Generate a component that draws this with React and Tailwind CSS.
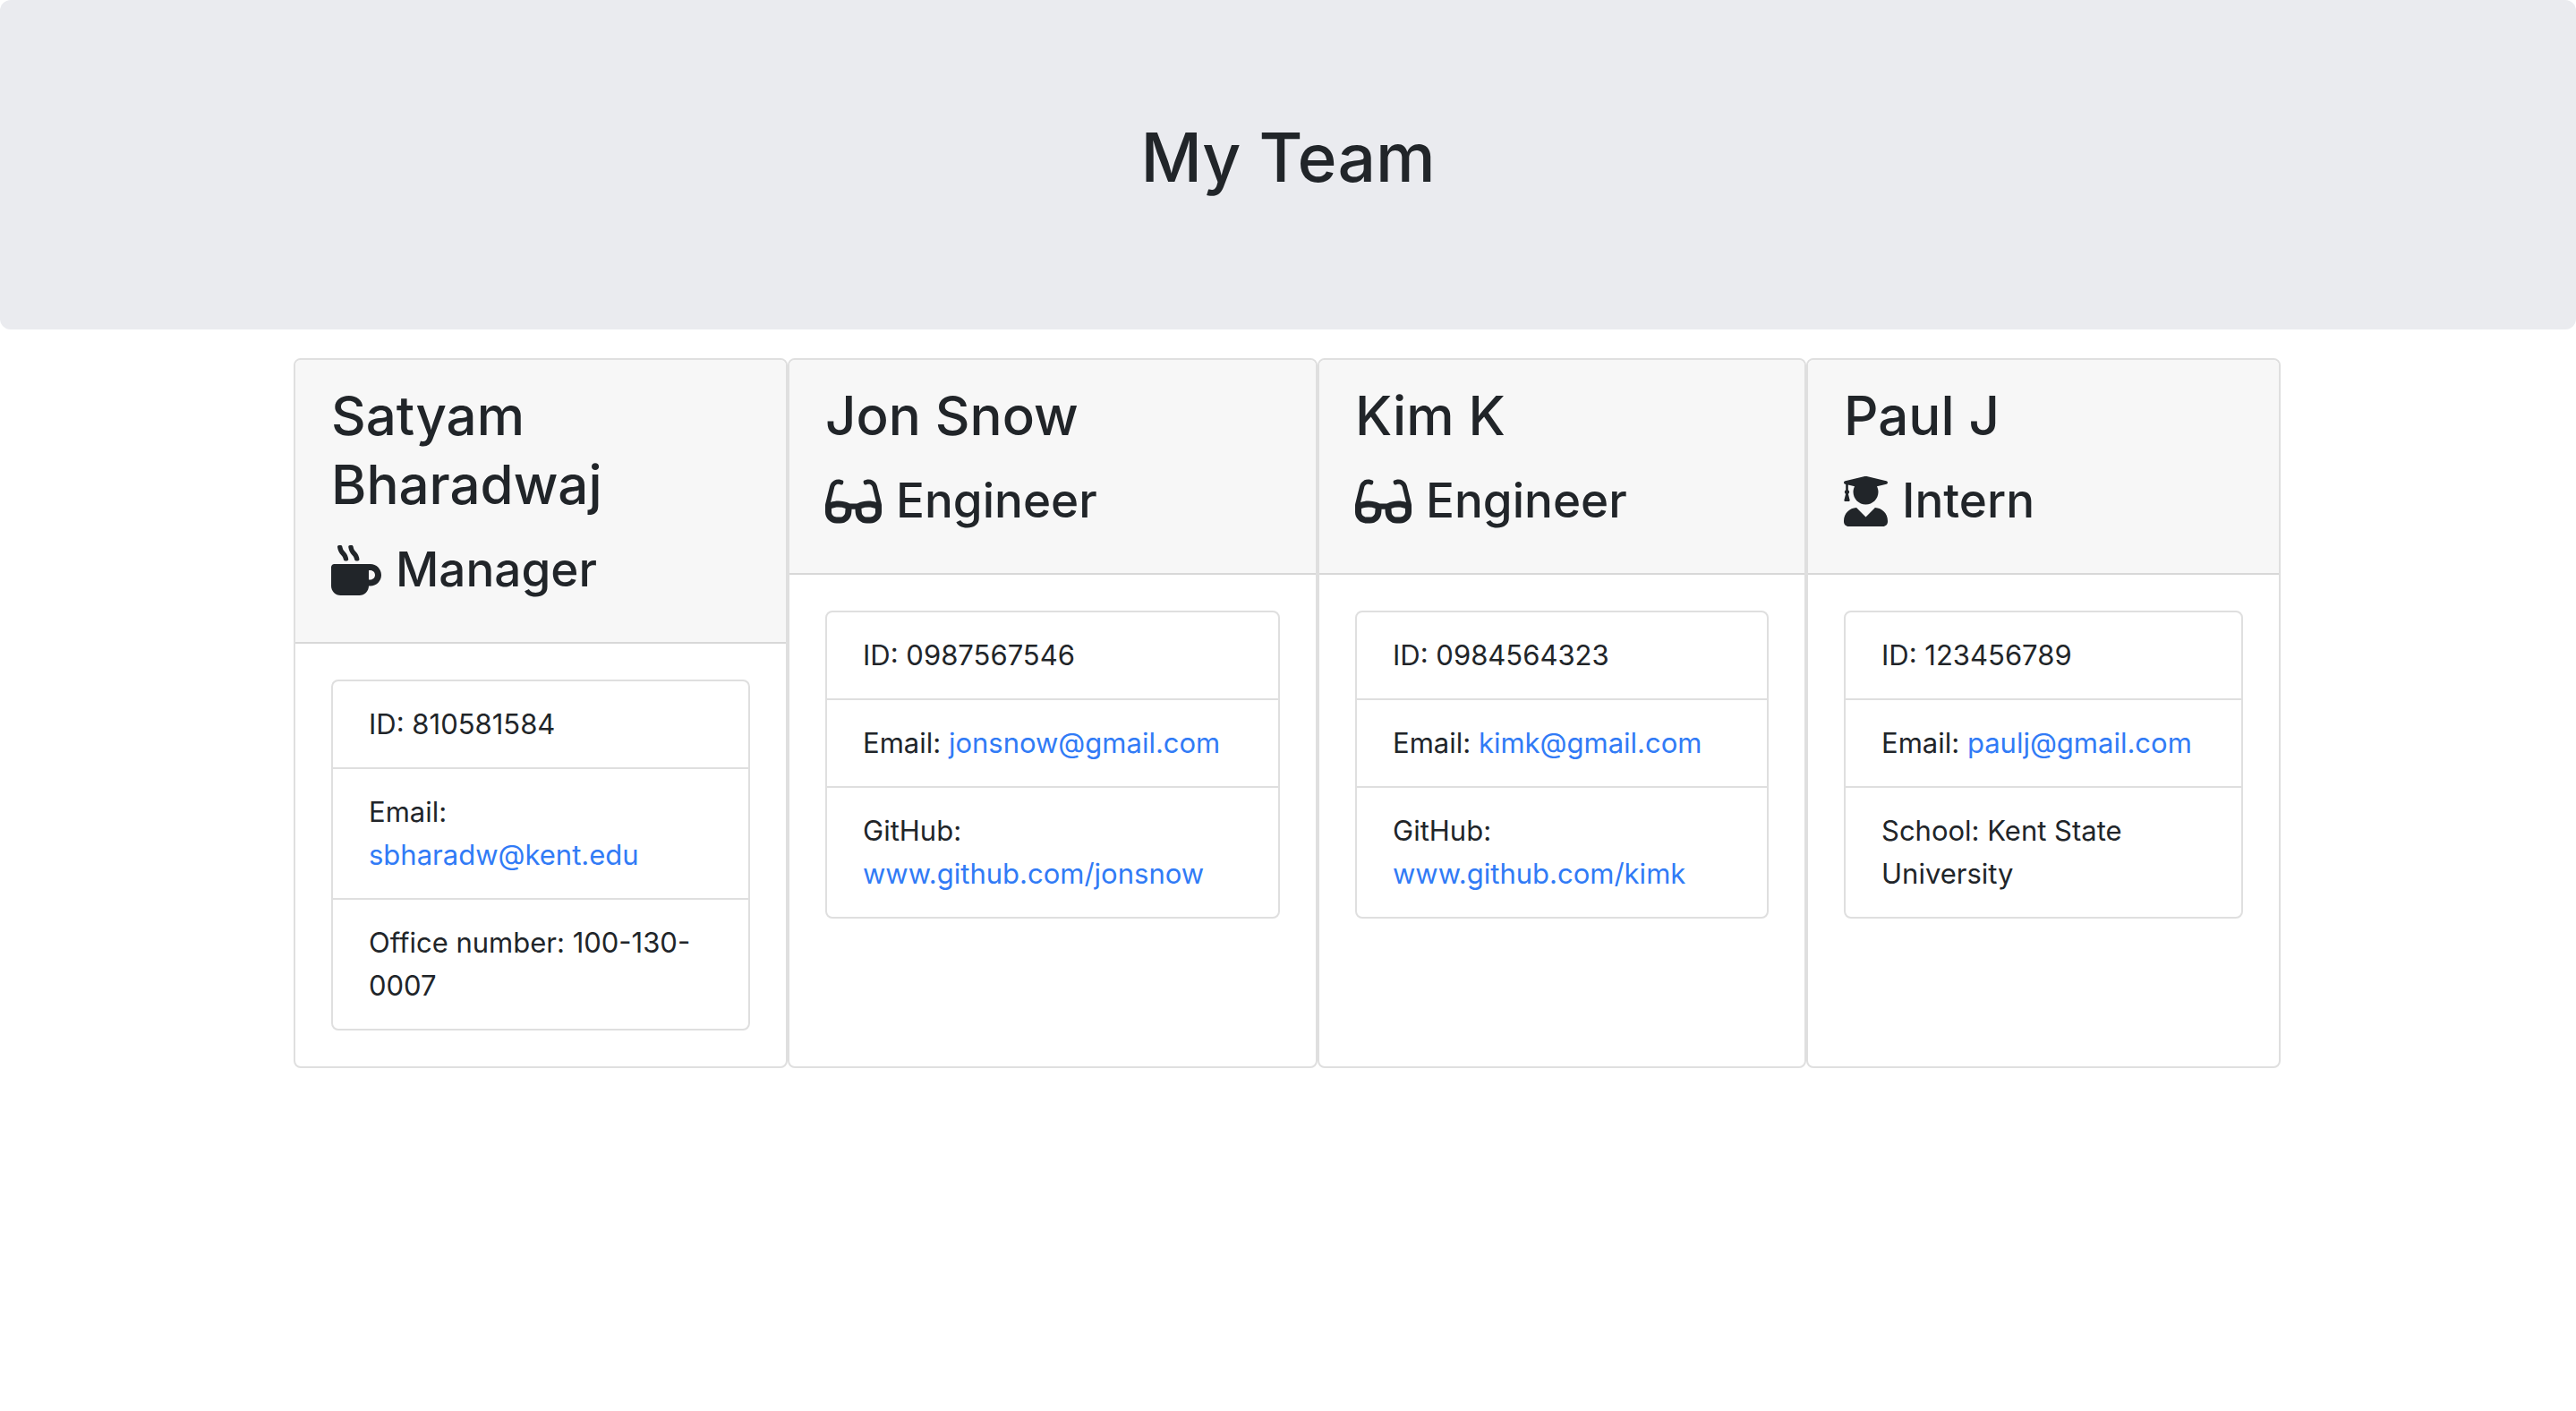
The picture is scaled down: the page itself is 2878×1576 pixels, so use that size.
import { FaMugHot, FaGlasses, FaUserGraduate } from "react-icons/fa";

const team = [
  {
    name: "Satyam Bharadwaj",
    role: "Manager",
    Icon: FaMugHot,
    iconClass: "h-14 w-14",
    id: "810581584",
    email: "sbharadw@kent.edu",
    extra: "Office number: 100-130-0007",
  },
  {
    name: "Jon Snow",
    role: "Engineer",
    Icon: FaGlasses,
    iconClass: "h-14 w-[63px]",
    id: "0987567546",
    email: "jonsnow@gmail.com",
    github: "www.github.com/jonsnow",
  },
  {
    name: "Kim K",
    role: "Engineer",
    Icon: FaGlasses,
    iconClass: "h-14 w-[63px]",
    id: "0984564323",
    email: "kimk@gmail.com",
    github: "www.github.com/kimk",
  },
  {
    name: "Paul J",
    role: "Intern",
    Icon: FaUserGraduate,
    iconClass: "h-14 w-[49px]",
    id: "123456789",
    email: "paulj@gmail.com",
    extra: "School: Kent State University",
  },
];

function MemberCard({ member }) {
  const { name, role, Icon, iconClass, id, email, github, extra } = member;
  return (
    <article className="min-w-0 overflow-hidden rounded-lg border-2 border-[#dfdfdf] bg-white">
      <header className="border-b-2 border-[#d8d8d8] bg-[#f7f7f7] px-10 pt-6 pb-10">
        <h2 className="mb-4 text-[60px] leading-[77px] font-medium">{name}</h2>
        <h3 className="flex items-center text-[53px] leading-[81px] font-medium">
          <Icon className={`mr-4 shrink-0 ${iconClass}`} aria-hidden="true" />
          {role}
        </h3>
      </header>
      <div className="p-10">
        <ul className="divide-y-2 divide-[#dfdfdf] rounded-lg border-2 border-[#dfdfdf] text-[31px] leading-[48px]">
          <li className="px-10 py-6">ID: {id}</li>
          <li className="px-10 py-6">
            Email:{" "}
            <a className="text-[#317bf6]" href={`mailto:${email}`}>
              {email}
            </a>
          </li>
          <li className="px-10 py-6">
            {github ? (
              <>
                GitHub:{" "}
                <a className="text-[#317bf6]" href={`https://${github}`}>
                  {github}
                </a>
              </>
            ) : (
              extra
            )}
          </li>
        </ul>
      </div>
    </article>
  );
}

export default function App() {
  return (
    <div className="min-h-screen bg-white font-['Inter',sans-serif] text-[#212529]">
      <header className="mb-8 rounded-xl bg-[#eaebef] px-16 pt-32 pb-36">
        <h1 className="text-center text-[75px] leading-[96px] font-medium">My Team</h1>
      </header>
      <main className="pr-0.5">
        <div className="mx-auto grid max-w-[2220px] grid-cols-[552fr_592fr_546fr_530fr]">
          {team.map((member) => (
            <MemberCard key={member.name} member={member} />
          ))}
        </div>
      </main>
    </div>
  );
}
